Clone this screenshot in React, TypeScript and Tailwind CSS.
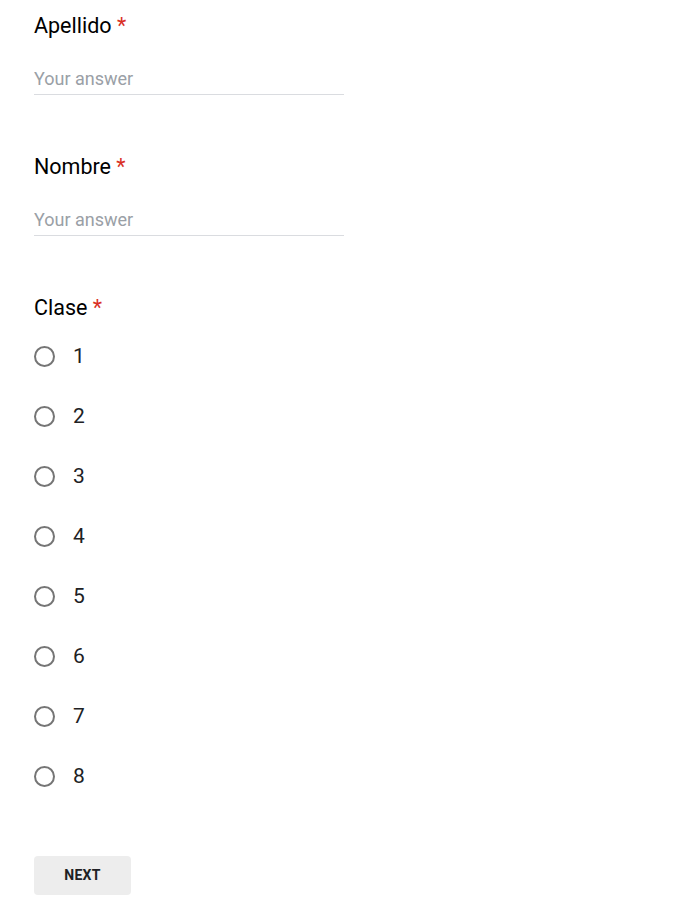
import { useState } from "react";

const TextQuestion = ({ label }: { label: string }) => {
    const [value, setValue] = useState("");
    return (
        <div className="pb-[46px]">
            <div className="text-[21.5px] leading-[24px] text-black pt-[14px]">
                {label} <span className="text-[#d93025]">*</span>
            </div>
            <div className="mt-[29px] w-[310px]">
                <input
                    value={value}
                    onChange={(e) => setValue(e.target.value)}
                    placeholder="Your answer"
                    className="w-full text-[18px] leading-[24px] pb-[3px] border-b border-[#dadce0] outline-none placeholder:text-[#9aa0a6] text-[#202124]"
                />
            </div>
        </div>
    );
};

const App = () => {
    const [clase, setClase] = useState<number | null>(null);
    const options = [1, 2, 3, 4, 5, 6, 7, 8];

    return (
        <div className="min-h-screen bg-white px-[34px] font-['Roboto',sans-serif]">
            <TextQuestion label="Apellido" />
            <TextQuestion label="Nombre" />
            <div>
                <div className="text-[21.5px] leading-[24px] text-black pt-[14px]">
                    Clase <span className="text-[#d93025]">*</span>
                </div>
                <div className="flex flex-col gap-[36px] mt-[24px]">
                    {options.map((n) => (
                        <label key={n} className="flex items-center gap-[18px] h-[24px] cursor-pointer" onClick={() => setClase(n)}>
                            <span className="w-[21px] h-[21px] rounded-full border-2 border-[#757575] flex items-center justify-center">
                                {clase === n ? <span className="w-[10px] h-[10px] rounded-full bg-[#673ab7]"></span> : ""}
                            </span>
                            <span className="text-[21px] leading-[24px] text-[#202124]">{n}</span>
                        </label>
                    ))}
                </div>
            </div>
            <div className="pt-[68px]">
                <button className="w-[97px] h-[39px] rounded-[4px] bg-[#ededed] text-[14px] font-bold tracking-[0.25px] text-[#202124]">
                    NEXT
                </button>
            </div>
        </div>
    );
};

export default App;
